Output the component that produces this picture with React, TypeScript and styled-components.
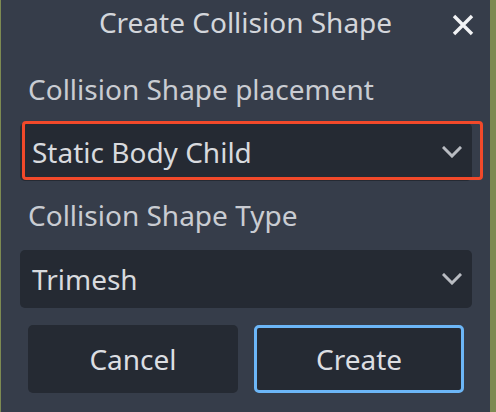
import React from 'react';
import styled, { createGlobalStyle } from 'styled-components';

const GlobalStyle = createGlobalStyle`
  html, body {
    margin: 0;
    padding: 0;
    background: #7d8a52;
  }
  body {
    font-family: 'Noto Sans', 'Open Sans', sans-serif;
  }
`;

const FONT = 28;

function Chevron() {
  return (
    <svg width="20" height="12" viewBox="0 0 20 12" fill="none">
      <path
        d="M2 2 L10 10 L18 2"
        stroke="#b9bcc2"
        strokeWidth="3"
        strokeLinecap="square"
      />
    </svg>
  );
}

function CloseIcon() {
  return (
    <svg width="22" height="22" viewBox="0 0 22 22" fill="none">
      <path d="M2 2 L20 20 M20 2 L2 20" stroke="#f2f3f5" strokeWidth="3.4" />
    </svg>
  );
}

function Select({ value, highlighted }: { value: string; highlighted?: boolean }) {
  return (
    <SelectBox>
      <SelectText>{value}</SelectText>
      <Chevron />
      {highlighted ? <Highlight /> : null}
    </SelectBox>
  );
}

export default function App() {
  return (
    <>
      <GlobalStyle />
      <Dialog>
        <TitleBar>
          <span />
          <Title>Create Collision Shape</Title>
          <CloseButton aria-label="close">
            <CloseIcon />
          </CloseButton>
        </TitleBar>
        <Body>
          <FieldLabel $top={29} $bottom={15}>
            Collision Shape placement
          </FieldLabel>
          <Select value="Static Body Child" highlighted />
          <FieldLabel $top={15} $bottom={16}>
            Collision Shape Type
          </FieldLabel>
          <Select value="Trimesh" />
          <Buttons>
            <Button>Cancel</Button>
            <Button $primary>Create</Button>
          </Buttons>
        </Body>
      </Dialog>
    </>
  );
}

const Dialog = styled.div`
  margin-left: 1px;
  width: 489px;
  height: 412px;
  background: #363d4a;
  box-sizing: border-box;
  overflow: hidden;
`;

const TitleBar = styled.div`
  display: grid;
  grid-template-columns: 1fr auto 1fr;
  align-items: center;
  padding: 3px 16px 0 16px;
  height: 41px;
  box-sizing: border-box;
`;

const Title = styled.div`
  font-size: ${FONT}px;
  line-height: 38px;
  color: #d3d6db;
  white-space: nowrap;
`;

const CloseButton = styled.div`
  justify-self: end;
  display: flex;
  align-items: center;
  justify-content: center;
  width: 22px;
  height: 22px;
  margin-top: 5px;
`;

const Body = styled.div`
  display: flex;
  flex-direction: column;
  padding: 0 18px 0 19px;
`;

const FieldLabel = styled.div<{ $top: number; $bottom: number }>`
  margin-top: ${p => p.$top}px;
  margin-bottom: ${p => p.$bottom}px;
  padding-left: 8px;
  font-size: ${FONT}px;
  line-height: 38px;
  color: #c9ccd2;
  white-space: nowrap;
`;

const SelectBox = styled.div`
  position: relative;
  display: flex;
  align-items: center;
  justify-content: space-between;
  height: 58px;
  padding: 0 10px 0 12px;
  background: #252a33;
  border-radius: 5px;
  box-sizing: border-box;
`;

const SelectText = styled.span`
  font-size: ${FONT}px;
  line-height: 38px;
  color: #d8dade;
`;

const Highlight = styled.div`
  position: absolute;
  left: 2px;
  top: -2px;
  width: 461px;
  height: 59px;
  border: 3px solid #f2492a;
  border-radius: 4px;
  box-sizing: border-box;
  pointer-events: none;
`;

const Buttons = styled.div`
  display: flex;
  justify-content: center;
  gap: 16px;
  margin-top: 17px;
`;

const Button = styled.div<{ $primary?: boolean }>`
  display: flex;
  align-items: center;
  justify-content: center;
  width: 210px;
  height: 68px;
  box-sizing: border-box;
  background: #252a33;
  border-radius: 5px;
  border: ${p => (p.$primary ? '3px solid #6cb6f7' : 'none')};
  font-size: ${FONT}px;
  line-height: 38px;
  color: #dcdee2;
`;
